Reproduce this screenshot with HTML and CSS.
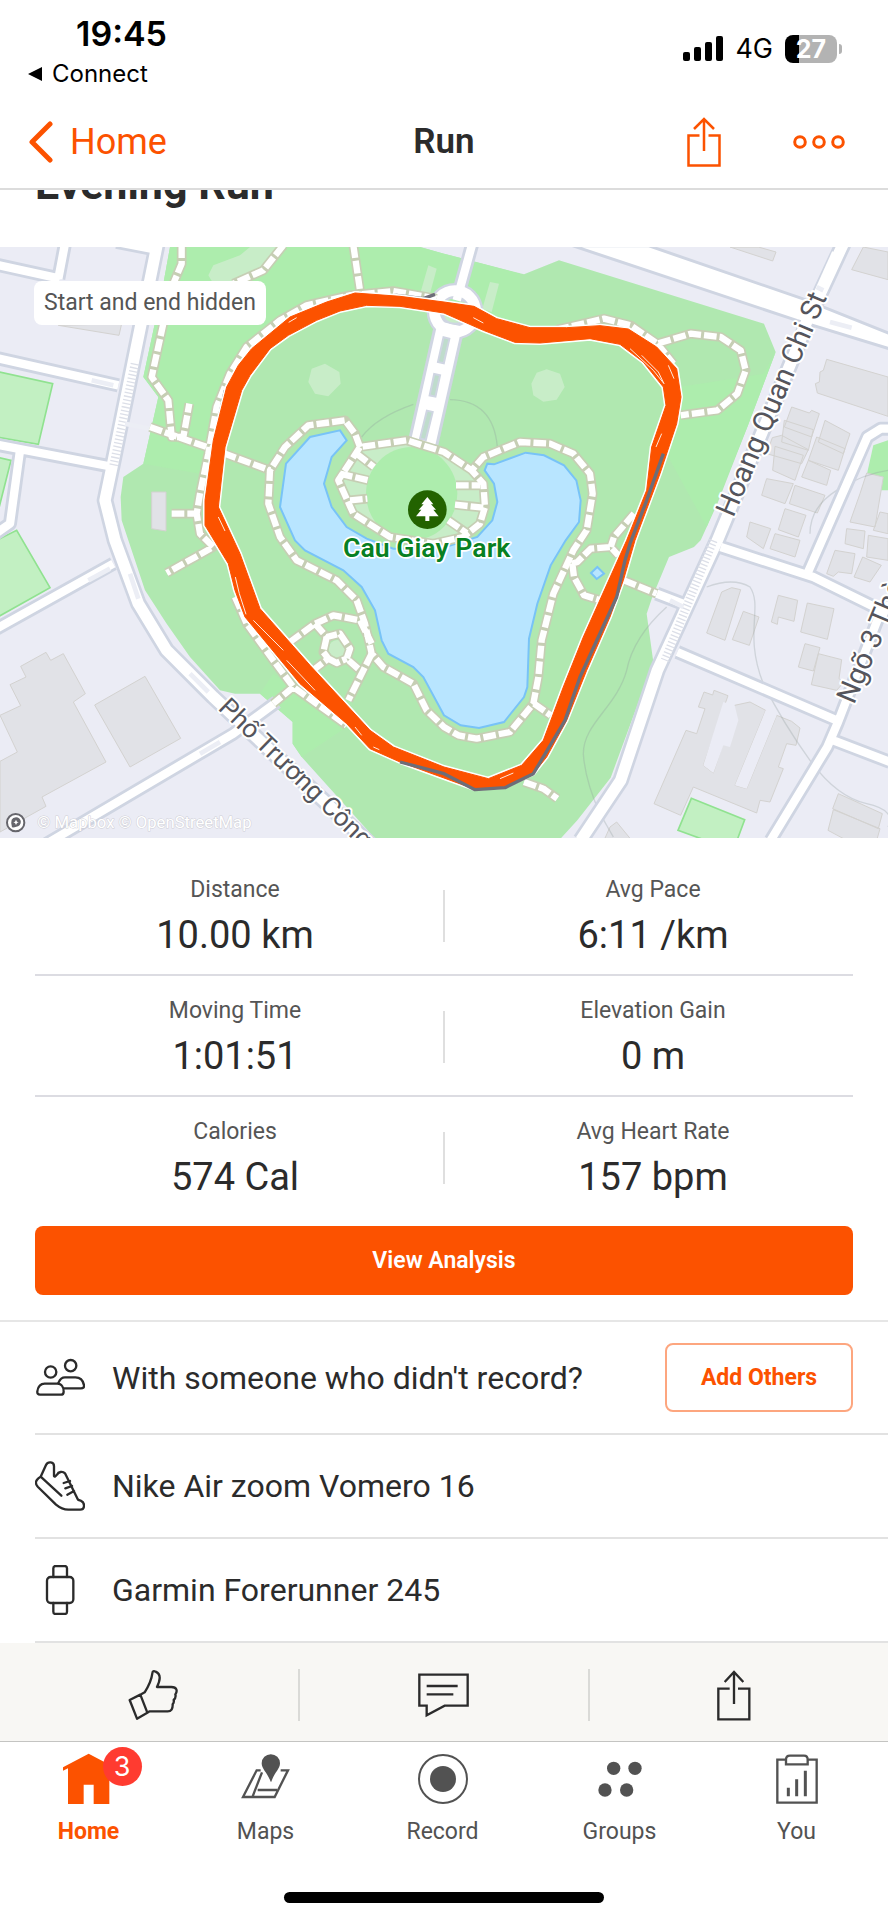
FILE: index.html
```html
<!DOCTYPE html>
<html lang="en">
<head>
<meta charset="utf-8">
<meta name="viewport" content="width=device-width, initial-scale=1">
<title>Run</title>
<link rel="stylesheet" href="styles.css">
</head>
<body>
<div class="app">
  <div class="status">
    <div class="status-left">
      <div class="time">19:45</div>
      <a class="return" href="#connect"><svg width="15" height="14" viewBox="0 0 15 14" aria-hidden="true"><path d="M0 7 14 0V14Z" fill="#000"/></svg>Connect</a>
    </div>
    <div class="status-right">
      <svg width="40" height="26" viewBox="0 0 40 26" aria-hidden="true"><rect x="0" y="16" width="7" height="9" rx="2"/><rect x="11" y="11" width="7" height="14" rx="2"/><rect x="22" y="6" width="7" height="19" rx="2"/><rect x="33" y="0" width="7" height="25" rx="2"/></svg>
      <span class="network">4G</span>
      <span class="battery"><span class="battery-body">27</span><span class="battery-cap"></span></span>
    </div>
  </div>

  <header class="nav">
    <a class="back" href="#home"><svg width="26" height="42" viewBox="0 0 26 42" fill="none" stroke="#fc5200" stroke-width="5" stroke-linecap="round" stroke-linejoin="round" aria-hidden="true"><path d="M22 3 4 21 22 39"/></svg>Home</a>
    <span class="nav-title">Run</span>
    <div class="nav-actions">
      <button class="icon-button" aria-label="Share"><svg width="34" height="50" viewBox="0 0 34 50" fill="none" stroke="#fc5200" stroke-width="2.500" aria-hidden="true"><path d="M12.500 18.500H1.500V48.500H32.500V18.500H21.500M17 34V2M7 12 17 2 27 12"/></svg></button>
      <button class="icon-button" aria-label="More"><svg width="52" height="14" viewBox="0 0 52 14" fill="none" stroke="#fc5200" stroke-width="3" aria-hidden="true"><circle cx="7" cy="7" r="5.300"/><circle cx="26" cy="7" r="5.300"/><circle cx="45" cy="7" r="5.300"/></svg></button>
    </div>
  </header>

  <main>
    <h1 class="title">Evening Run</h1>

    <div class="map">
      <svg class="map-art" viewBox="0 20 2664 1773" preserveAspectRatio="xMidYMid slice" role="img" aria-label="Route around Cau Giay Park">
        <defs>
          <g id="trails">
            <path d="M545 15V70L520 130M490 250 455 410 505 480 515 590H550L568 490M450 560 620 620 810 690M850 15 790 90 700 130M515 820H590M1060 15 1080 150M1310 175 1180 152 1050 165 920 195 840 240 740 320 690 400 650 500 625 640 600 760 590 820 600 880 640 920 500 998M705 1070 740 1150 820 1260 880 1340 1040 1455M880 1340 820 1390M1670 268 1812 235 1892 255 1972 310 2072 280 2162 290 2222 330 2237 390 2212 460 2152 510 2042 525M1972 310 2020 370"/>
            <path d="M1080 620 1065 580 1035 540 925 555 855 620 810 690 805 790 840 890 890 960 1010 1020 1070 1080 1095 1150 1115 1240 1150 1280 1240 1330 1280 1410 1332 1460 1375 1485 1430 1495 1530 1475 1600 1390 1615 1310 1625 1200 1660 1060 1720 930 1760 870 1778 760 1770 700 1720 640 1650 610 1560 605 1450 650 1415 690 1450 730 1455 800 1440 850 1390 890 1300 910 1170 890 1060 820 1015 720 1080 620 1220 600 1332 635 1415 690"/>
            <path d="M1070 640 1122 680M1020 700 1105 720M1050 780 1102 775M1368 735H1440M1365 793 1450 802M1345 840 1400 878M870 1205 945 1150 1000 1125 1080 1140 1115 1210M1115 1240 1090 1290 1045 1380M945 1150 980 1190 1020 1180 1050 1225 1040 1255 1080 1290M980 1190 970 1235 985 1255 945 1285M985 1255 1010 1268 1040 1255M1715 970 1732 965 1772 925 1832 920 1855 945M1717 970 1722 1010 1752 1065 1802 1080M1902 820 1842 890 1832 920M1872 1020 1970 1060M1602 1390 1652 1425M1572 1625 1630 1645 1672 1675M1800 1090 1780 1160"/>
          </g>
          <path id="route" fill-rule="evenodd" d="M1065 158 1200 168 1332 185 1422 198 1490 235 1590 262H1700L1800 256 1885 266 1970 320 2030 385 2043 470 2030 550 1980 700 1905 900 1870 1020 1830 1130 1760 1290 1700 1440 1640 1550 1600 1600 1510 1640 1420 1645 1332 1613 1200 1565 1110 1525 1040 1450 900 1330 735 1130 705 1050 685 970 615 855V780L640 600 680 440 715 375 755 325 870 230 980 185ZM1100 195 1020 212 950 240 865 285 810 325 750 405 725 450 675 620 655 800 720 940 780 1105 930 1275 1110 1470 1180 1520 1332 1580 1465 1615 1565 1575 1630 1500 1690 1340 1750 1190 1880 900 1940 750 1955 620 1998 495 1990 440 1930 365 1860 312 1770 295 1620 308 1545 306 1450 270 1332 218 1200 198Z"/>
        </defs>

        <rect width="2664" height="1800" fill="#ebecf5"/>
        <path class="park" d="M510 20 490 130 430 410 475 470 430 670 370 710 362 770 365 840 385 900 435 1050 500 1150 570 1250 660 1350 705 1360H780L878 1445V1510L905 1550 1130 1800H1677L1732 1740 1832 1612 1960 1265 1940 1120 1957 1070 2007 950 2082 920 2102 900 2152 790 2242 560 2327 335 2292 250 1677 60 1572 102 1332 40 1260 20Z"/>
        <path class="park-light" d="M510 20 490 130 430 410 475 470 430 670 600 700 680 450 860 230 1060 150 1310 185 1560 260V100L1332 40 1260 20ZM2120 860 2000 640 2040 440 2290 400 2327 335 2242 560ZM820 1300 780 1360 878 1445V1510L905 1550 1040 1460Z"/>
        <path class="lawn" d="M625 105 640 75 720 45 750 20H850L790 90 700 130H640ZM975 370 1018 395 1022 430 985 468 945 460 925 425 935 385ZM1640 387 1680 400 1694 440 1670 478 1630 484 1600 465 1594 430 1610 397ZM1285 75 1310 85 1290 160 1262 155ZM1470 125 1497 130 1475 215 1447 205Z"/>
        <path class="field" d="M-10 393 158 430 115 612-10 590ZM-10 650 33 660-10 830ZM-10 900 50 870 150 1042-10 1132ZM2074 1674 2234 1738 2200 1830 2034 1770Z"/>
        <path class="park-light" d="M2620 615 2664 600V750H2590Z"/>

        <g class="building">
          <path d="M455 755H498V872L455 865ZM175 255 365 250 357 285ZM0 1425 62 1396 30 1333 78 1310 62 1278 138 1236 152 1260 190 1240 256 1360 220 1385 318 1565 126 1670 138 1698 0 1775V1563L52 1535ZM284 1394 435 1308 542 1494 390 1580Z"/>
          <path d="M2190 20H2275L2328 35 2318 62ZM2590 20 2664 35V118L2555 88ZM2480 357 2664 410V528L2452 458 2446 430 2458 425 2460 395 2470 390Z"/>
          <path d="M2375 500 2428 518 2435 510 2458 520 2435 590 2353 560ZM2353 540 2440 568 2425 630 2345 605ZM2345 585 2425 628 2405 670 2300 640 2317 592ZM2325 618 2410 645 2385 720 2318 690ZM2300 715 2380 730 2355 790 2285 765 2295 730ZM2475 540 2550 580 2530 640 2455 605ZM2450 590 2535 625 2515 690 2425 660ZM2425 660 2492 690 2480 735 2405 710ZM2385 735 2475 765 2452 818 2368 790ZM2355 805 2418 825 2395 890 2335 868ZM2250 845 2312 865 2290 925 2240 890ZM2325 880 2400 900 2385 950 2310 925Z"/>
          <path d="M2600 698 2650 710 2625 860 2550 845 2580 760ZM2640 815 2664 820V880L2620 870ZM2540 865 2595 872 2590 925 2535 910ZM2605 885 2664 895V960L2600 950ZM2505 930 2565 940 2555 1000 2515 995 2500 1008 2480 1000ZM2588 950 2644 975 2610 1025 2562 1010Z"/>
          <path d="M2195 1042 2222 1048 2175 1200 2120 1178 2165 1055ZM2230 1113 2277 1130 2248 1215 2197 1198ZM2335 1065 2393 1080 2382 1143 2335 1130 2332 1152 2314 1145ZM2422 1088 2502 1105 2482 1197 2402 1175ZM2415 1210 2460 1222 2440 1292 2395 1280ZM2455 1240 2525 1258 2517 1315 2532 1325 2510 1350 2434 1333Z"/>
          <path d="M2112 1355 2138 1364 2142 1350 2184 1366 2110 1575 2140 1598 2165 1520 2190 1440 2204 1395 2250 1385 2297 1410 2205 1635 2240 1645 2330 1425 2375 1443 2400 1463 2388 1515 2360 1510 2335 1580 2350 1585 2310 1685 2280 1680 2270 1718 2080 1640 2042 1725 1962 1690 2058 1470 2090 1480 2115 1405 2095 1400Z"/>
          <path d="M1850 1745 1895 1800H1812L1830 1760ZM2515 1660 2647 1720 2635 1765 2498 1705ZM2500 1708 2640 1765 2630 1800H2540L2484 1770Z"/>
        </g>
        <path d="M2110 1575 2170 1385 2204 1395 2215 1440 2190 1520 2170 1515 2140 1598ZM2205 1635 2297 1410 2330 1425 2240 1645Z" fill="#ebecf5"/>

        <path class="contour" d="M1085 590Q1130 530 1240 492M1350 478Q1480 480 1492 620M2000 1100Q1900 1190 1880 1290C1850 1400 1750 1450 1750 1540Q1755 1620 1800 1720L1840 1790M2120 1040Q2200 1010 2250 1040C2290 1100 2230 1180 2290 1330Q2350 1450 2430 1560T2600 1690T2664 1760M2430 880Q2430 800 2510 750T2664 690"/>

        <g class="road-case">
          <path class="w-main" d="M472 10 340 660 315 780 345 900 415 1090 500 1230 640 1370 1130 1830M2530 10 2442 200 2152 900 1972 1290 1862 1620 1742 1800"/>
          <path class="w-side" d="M-10 73 180 115M195 10 175 115M350 5 480 30M-10 353 355 435M-10 613 340 680M60 630 30 850-20 885M-10 1165 340 970M140 1810 700 1480 830 1385M2162 920 2440 1010 2664 1120M2422 1000 2602 590 2642 565H2680M2032 1235 2510 1440M2670 1090 2632 1140 2512 1450 2482 1520 2312 1800M2500 1500 2670 1565M1970 1060 2062 1095M1417 10 1370 180"/>
          <path class="w-avenue" d="M1350 250 1270 605"/>
          <circle cx="1365" cy="213" r="62"/>
        </g>
        <g class="road">
          <path class="w-main" d="M472 10 340 660 315 780 345 900 415 1090 500 1230 640 1370 1130 1830M2530 10 2442 200 2152 900 1972 1290 1862 1620 1742 1800"/>
          <path class="w-side" d="M-10 73 180 115M195 10 175 115M350 5 480 30M-10 353 355 435M-10 613 340 680M60 630 30 850-20 885M-10 1165 340 970M140 1810 700 1480 830 1385M2162 920 2440 1010 2664 1120M2422 1000 2602 590 2642 565H2680M2032 1235 2510 1440M2670 1090 2632 1140 2512 1450 2482 1520 2312 1800M2500 1500 2670 1565M1970 1060 2062 1095M1417 10 1370 180"/>
          <path class="w-avenue" d="M1350 250 1270 605"/>
          <circle cx="1365" cy="213" r="62"/>
        </g>
        <path d="M1717 16H1945L2407 175 2670 280V326L2390 240Z" fill="#fff" stroke="#cfd5e2" stroke-width="9"/>
        <path d="M2512 40 2395 300" stroke="#fff" stroke-width="34"/>
        <path d="M1340 290 1322 370M1312 400 1297 470M1290 510 1268 600" stroke="#cfd5e2" stroke-width="24" fill="none"/>
        <path d="M1339 296 1323 364M1311 406 1298 464M1289 516 1269 594" stroke="#bfdccc" stroke-width="12" fill="none"/>
        <ellipse cx="1365" cy="222" rx="36" ry="28" fill="#c8edc8" stroke="#cfd5e2" stroke-width="6"/>
        <g class="steps">
          <path d="M405 370 340 680M2140 900 1995 1260"/>
          <path class="steps-line" d="M275 420 340 435M375 550 450 565M265 1020 330 985M390 1000 415 1075M570 1300 625 1355M600 1540 660 1505M2450 140 2470 150M2490 245 2555 262M2010 1080 2050 1100"/>
        </g>

        <path class="lawn" d="M1080 625 1220 605 1332 635 1415 690 1450 730 1455 800 1435 850 1390 890 1300 905 1170 890 1060 820 1015 710Z"/>
        <ellipse class="park-light" cx="1235" cy="760" rx="137" ry="140"/>
        <path class="lake" d="M1020 570 1040 600 995 650 972 730 995 800 1040 860 1100 895 1180 925H1320L1432 890 1477 840 1492 785 1482 730 1454 690 1462 670 1482 672 1577 637 1632 645 1692 675 1729 720 1742 780 1737 845 1697 900 1652 975 1612 1090 1587 1195 1582 1340 1572 1370 1512 1445 1437 1463 1382 1455 1332 1425 1270 1310 1240 1280 1165 1240 1145 1200 1125 1110 1085 1040 1030 990 915 930 885 900 840 800 858 670 930 590Z"/>
        <path class="lake" d="M1792 980 1812 1000 1790 1016 1773 998Z"/>
        <circle class="lawn" cx="1012" cy="1225" r="26"/>

        <use class="trail-case" href="#trails"/>
        <use class="trail" href="#trails"/>

        <path class="track" d="M1145 168 1190 165 1270 175 1305 162M676 450 651 560 636 640"/>
        <use class="route-edge" href="#route"/>
        <use class="route" href="#route"/>
        <path class="sliver" d="M866 246 890 232M655 830 675 872M706 1010 718 1060 738 1122M760 1140 850 1230M860 1260 945 1350M1065 1460 1085 1485M1120 1520 1138 1528M1420 232 1450 248M1890 325 1960 390 1992 430M1925 345 1975 395 1992 430M2005 375 2022 415M1985 580 1968 620M1500 1615 1540 1598"/>
        <path class="track" d="M1990 640 1940 780 1890 910 1875 960 1850 1070 1740 1310 1695 1440 1600 1600 1515 1642 1425 1648 1332 1600 1200 1565"/>

        <circle cx="1282" cy="808" r="58" fill="#236300"/>
        <path d="M1282 770 1300 792H1293L1308 808H1300L1316 828H1288V842H1276V828H1248L1264 808H1256L1271 792H1264Z" fill="#fff"/>
        <text class="park-name" x="1280" y="950">Cau Giay Park</text>
        <text class="street" transform="translate(2200 834) rotate(-67)">Hoang Quan Chi St</text>
        <text class="street street-small" transform="translate(652 1406) rotate(44)">Phố Trương Công</text>
        <text class="street" transform="translate(2562 1395) rotate(-67)">Ngõ 3 Thà</text>
        <circle cx="47" cy="1747" r="26" fill="#fff" stroke="#66666c" stroke-width="6"/>
        <path d="M36 1761Q28 1731 48 1731A14 14 0 1 1 49 1759Q42 1762 36 1761ZM48 1738 51 1744 56 1746 51 1748 48 1754 45 1748 40 1746 45 1744Z" fill="#66666c" fill-rule="evenodd"/>
        <text class="credit" x="112" y="1762">© Mapbox © OpenStreetMap</text>
      </svg>
      <span class="map-note">Start and end hidden</span>
    </div>

    <section class="stats" aria-label="Stats">
      <dl class="stat-row">
        <div><dt>Distance</dt><dd>10.00 km</dd></div>
        <div><dt>Avg Pace</dt><dd>6:11 /km</dd></div>
      </dl>
      <dl class="stat-row">
        <div><dt>Moving Time</dt><dd>1:01:51</dd></div>
        <div><dt>Elevation Gain</dt><dd>0 m</dd></div>
      </dl>
      <dl class="stat-row">
        <div><dt>Calories</dt><dd>574 Cal</dd></div>
        <div><dt>Avg Heart Rate</dt><dd>157 bpm</dd></div>
      </dl>
      <button class="primary">View Analysis</button>
    </section>

    <ul class="details">
      <li class="detail detail-tall">
        <svg width="50" height="50" viewBox="105 100 150 150" class="line-icon" aria-hidden="true"><circle cx="152" cy="157" r="17"/><circle cx="212" cy="138" r="17"/><path d="M134 192H172C186 192 191 205 191 216Q191 225 182 225H120Q111 225 112 215C114 202 120 192 134 192ZM176 188Q182 173 195 173H226C244 173 250 185 252 197Q253 206 243 206H192"/></svg>
        <span class="detail-text">With someone who didn't record?</span>
        <button class="outline">Add Others</button>
      </li>
      <li class="detail">
        <svg width="50" height="50" viewBox="105 425 150 150" class="line-icon" aria-hidden="true"><path d="M122 472 138 437C144 425 162 427 162 441V470Q165 474 171 466C175 457 188 455 195 462L234 541Q236 543 242 544C256 549 255 571 241 571H205Q186 571 168 556L114 503Q101 489 115 477ZM122 472 184 529M210 485 191 491M216 500 196 507M222 515 202 526"/></svg>
        <span class="detail-text">Nike Air zoom Vomero 16</span>
      </li>
      <li class="detail">
        <svg width="50" height="50" viewBox="105 737 150 150" class="line-icon" aria-hidden="true"><rect x="141" y="773" width="79" height="78" rx="11"/><path d="M160 773V747Q160 740 167 740H194Q201 740 201 747V773M160 851V877Q160 884 167 884H194Q201 884 201 877V851"/></svg>
        <span class="detail-text">Garmin Forerunner 245</span>
      </li>
    </ul>
  </main>

  <div class="actions">
    <button class="icon-button" aria-label="Give kudos"><svg width="50" height="52" viewBox="388 117 150 156" class="line-icon" aria-hidden="true"><path d="M393 210 425 194 446 248 415 266ZM425 194 438 187Q458 155 461 130Q462 120 471 125C488 133 485 150 475 171H518C535 171 537 183 530 193Q533 203 525 210Q527 217 522 223Q523 244 507 244H453L446 248"/></svg></button>
    <button class="icon-button" aria-label="Comment"><svg width="52" height="50" viewBox="1254 121 156 150" class="line-icon sharp" aria-hidden="true"><path d="M1258 135H1403V228H1334L1280 257V228H1258ZM1280 169H1373M1280 194H1360"/></svg></button>
    <button class="icon-button" aria-label="Share"><svg width="34" height="52" viewBox="820 117 102 156" class="line-icon sharp" aria-hidden="true"><path d="M858 176H824V268H917V176H883M871 222V124M843 156 871 126 899 156"/></svg></button>
  </div>

  <nav class="tabs" aria-label="Main">
    <a class="tab active" href="#home" aria-current="page"><span class="tab-icon"><svg width="52" height="52" viewBox="189 371 156 156" aria-hidden="true"><path d="M266 373 343 414V423L328 417V524H281V466H251V524H204V417L189 424V414Z" fill="#fc5200"/></svg><span class="badge">3</span></span>Home</a>
    <a class="tab" href="#maps"><span class="tab-icon"><svg width="52" height="52" viewBox="723 371 156 156" aria-hidden="true"><path d="M785 423H773L732 503H827L867 423H845M789 429 761 501M776 482H834" fill="none" stroke="#525252" stroke-width="7"/><path d="M815 457C805 430 788 419 788 402A27 27 0 0 1 843 402C843 419 826 430 817 457Z" fill="#525252"/></svg></span>Maps</a>
    <a class="tab" href="#record"><span class="tab-icon"><svg width="52" height="52" viewBox="0 0 156 156" aria-hidden="true"><circle cx="78" cy="78" r="72" fill="none" stroke="#525252" stroke-width="6"/><circle cx="78" cy="78" r="39" fill="#525252"/></svg></span>Record</a>
    <a class="tab" href="#groups"><span class="tab-icon"><svg width="52" height="52" viewBox="449 371 156 156" fill="#525252" aria-hidden="true"><circle cx="508" cy="417" r="20"/><circle cx="572" cy="417" r="20"/><circle cx="482" cy="482" r="20"/><circle cx="547" cy="482" r="20"/></svg></span>Groups</a>
    <a class="tab" href="#you"><span class="tab-icon"><svg width="52" height="52" viewBox="981 371 156 156" fill="none" stroke="#525252" stroke-width="7" aria-hidden="true"><path d="M1025 391H1000V520H1118V391H1092M1026 405V391Q1026 379 1038 379H1080Q1091 379 1091 391V405Z"/><path d="M1033 475V501M1058 450V501M1084 424V501" stroke-width="9"/></svg></span>You</a>
  </nav>
  <div class="home-indicator"></div>
</div>
</body>
</html>
```

FILE: styles.css
```css
* { box-sizing: border-box; }
body {
  margin: 0;
  background: #fff;
  color: #2b2b2b;
  font-family: Roboto, "Liberation Sans", sans-serif;
}
button { font: inherit; cursor: pointer; }
a { color: inherit; text-decoration: none; }
svg { display: block; flex: none; }
.app { display: flex; flex-direction: column; min-height: 100vh; }

.status {
  display: flex;
  justify-content: space-between;
  height: 98px;
  padding: 12px 46px 0 28px;
  background: #fff;
  color: #000;
  font-family: Inter, "Liberation Sans", sans-serif;
}
.time { padding-left: 48px; font-size: 34px; line-height: 44px; font-weight: 600; }
.return { display: flex; align-items: center; gap: 9px; font-size: 24px; line-height: 35px; }
.status-right { display: flex; align-items: center; gap: 12px; height: 74px; }
.network { font-size: 27px; line-height: 32px; }
.battery { display: flex; align-items: center; gap: 2px; }
.battery-body {
  width: 52px;
  border-radius: 8px;
  background: linear-gradient(90deg, #000 27%, #b3b3b3 27%);
  color: #fff;
  font-size: 25px;
  line-height: 28px;
  font-weight: 700;
  text-align: center;
}
.battery-cap { width: 3px; height: 10px; border-radius: 0 3px 3px 0; background: #b3b3b3; }

.nav {
  position: relative;
  z-index: 2;
  display: grid;
  grid-template-columns: 1fr auto 1fr;
  align-items: center;
  height: 92px;
  padding: 0 28px 2px;
  border-bottom: 2px solid #dcdcdc;
  background: #fff;
}
.back { display: flex; align-items: center; gap: 16px; color: #fc5200; font-size: 36px; line-height: 44px; }
.nav-title { font-size: 35px; line-height: 44px; font-weight: 600; }
.nav-actions { display: flex; align-items: center; justify-content: flex-end; gap: 72px; padding-right: 15px; }
.icon-button { display: flex; align-items: center; justify-content: center; padding: 0; border: 0; background: none; }

.title { margin: -30px 0 0; padding: 0 35px 39px; font-size: 43px; line-height: 48px; font-weight: 700; }

.map { position: relative; overflow: hidden; }
.map-art { width: 100%; height: auto; }
.map-note {
  position: absolute;
  top: 34px;
  left: 34px;
  padding: 0 10px;
  border-radius: 8px;
  background: #fff;
  color: #555;
  font-size: 23px;
  line-height: 44px;
}
.park { fill: #b0e8b0; }
.park-light { fill: #adedad; }
.lawn { fill: #c8edc8; }
.field { fill: #c2f0c2; stroke: #90e290; stroke-width: 5; }
.building { fill: #e1e2e7; stroke: #d3d2d0; stroke-width: 3; }
.contour { fill: none; stroke: #8d9c9c; stroke-opacity: 0.3; stroke-width: 4; }
.road-case, .road { fill: none; stroke-linejoin: round; }
.road-case { stroke: #cfd5e2; }
.road { stroke: #fff; }
.road-case .w-main { stroke-width: 50; }
.road-case .w-side { stroke-width: 42; }
.road-case .w-avenue { stroke-width: 92; }
.road-case circle { stroke-width: 46; }
.road .w-main { stroke-width: 34; }
.road .w-side { stroke-width: 25; }
.road .w-avenue { stroke-width: 74; }
.road circle { stroke-width: 32; }
.steps { fill: none; stroke: #dcdfe8; stroke-width: 26; stroke-dasharray: 4 7; }
.steps-line { stroke-width: 14; stroke-dasharray: none; stroke: #eceef5; }
.lake { fill: #b8e5ff; stroke: #78c3f7; stroke-width: 6; }
.trail-case, .trail { fill: none; stroke-linejoin: round; }
.trail-case { stroke: #c6ceb4; stroke-width: 29; }
.trail { stroke: #fff; stroke-width: 19; stroke-dasharray: 38 9; }
.route { fill: #fc5200; stroke: #fc5200; stroke-width: 3; stroke-linejoin: round; }
.route-edge { fill: #fff; stroke: #fff; stroke-width: 12; stroke-linejoin: round; }
.sliver { fill: none; stroke: #ffe9de; stroke-width: 3; }
.track { fill: none; stroke: #6d6d78; stroke-width: 10; stroke-linejoin: round; }
.park-name, .street, .credit { paint-order: stroke; stroke-linejoin: round; }
.park-name { fill: #078022; stroke: #fff; stroke-width: 10; font-size: 80px; font-weight: 600; text-anchor: middle; }
.street { fill: #55555c; stroke: #fff; stroke-width: 12; font-size: 86px; }
.street-small { font-size: 78px; }
.credit { fill: #fff; stroke: #cfcfd6; stroke-width: 3; font-size: 50px; }

.stats { padding: 17px 35px 25px; }
.stat-row {
  display: grid;
  grid-template-columns: 1fr 1fr;
  gap: 18px;
  margin: 0;
  padding: 20px 0 14px;
  border-bottom: 2px solid #dcdce2;
  background: linear-gradient(#dfdfdf, #dfdfdf) center 35px / 2px 52px no-repeat;
  text-align: center;
}
.stat-row:last-of-type { margin-bottom: 10px; border-bottom: 0; }
.stat-row dt { color: #555; font-size: 23px; line-height: 30px; }
.stat-row dd { margin: 5px 0 0; font-size: 38px; line-height: 50px; }
.primary {
  display: block;
  width: 100%;
  padding: 0;
  border: 0;
  border-radius: 8px;
  background: #fc5200;
  color: #fff;
  font-size: 23px;
  line-height: 69px;
  font-weight: 600;
}

.details { margin: 0; padding: 0 0 0 35px; border-top: 2px solid #e6e6e6; list-style: none; }
.detail {
  display: flex;
  align-items: center;
  gap: 27px;
  min-height: 104px;
  padding-right: 35px;
  border-bottom: 2px solid #e2e2e2;
}
.detail-tall { min-height: 113px; }
.detail-text { flex: 1; font-size: 32px; line-height: 40px; }
.outline {
  width: 188px;
  padding: 0;
  border: 2px solid #fda67f;
  border-radius: 8px;
  background: #fff;
  color: #fc5200;
  font-size: 23px;
  line-height: 65px;
  font-weight: 700;
}
.line-icon { fill: none; stroke: #2b2b2b; stroke-width: 7; stroke-linecap: round; stroke-linejoin: round; }
.sharp { stroke-linecap: butt; stroke-linejoin: miter; }

.actions {
  display: grid;
  grid-template-columns: repeat(3, 1fr);
  height: 99px;
  padding: 26px 10px 21px 8px;
  border-bottom: 1px solid #c4c4c2;
  background: #f8f7f4;
}
.actions .icon-button + .icon-button { border-left: 2px solid #dadad7; }

.tabs { display: grid; grid-template-columns: repeat(5, 1fr); padding: 11px 3px 0 0; }
.tab {
  display: flex;
  flex-direction: column;
  align-items: center;
  gap: 12px;
  color: #525252;
  font-size: 23px;
  line-height: 30px;
}
.tab.active { color: #fc5200; font-weight: 700; }
.tab-icon { position: relative; }
.badge {
  position: absolute;
  top: -6px;
  right: -27px;
  width: 39px;
  border-radius: 20px;
  background: #ff3b30;
  color: #fff;
  font-family: Inter, sans-serif;
  font-size: 27px;
  line-height: 39px;
  font-weight: 400;
  text-align: center;
}
.home-indicator { width: 36%; height: 11px; margin: auto auto 17px; border-radius: 6px; background: #000; }
```
